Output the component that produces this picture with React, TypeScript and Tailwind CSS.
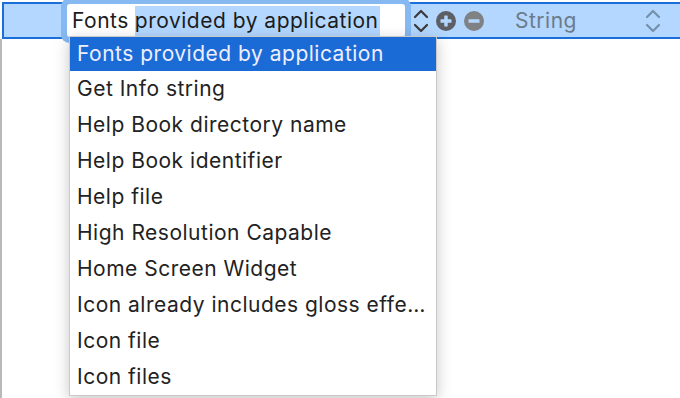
import React from "react";

const items = [
  "Fonts provided by application",
  "Get Info string",
  "Help Book directory name",
  "Help Book identifier",
  "Help file",
  "High Resolution Capable",
  "Home Screen Widget",
  "Icon already includes gloss effe…",
  "Icon file",
  "Icon files",
];

function Chevrons({ color }: { color: string }) {
  return (
    <svg width="16" height="26" viewBox="0 0 16 26" fill="none">
      <path d="M2 9 L8 3 L14 9" stroke={color} strokeWidth="2.2" strokeLinecap="round" strokeLinejoin="round" />
      <path d="M2 17 L8 23 L14 17" stroke={color} strokeWidth="2.2" strokeLinecap="round" strokeLinejoin="round" />
    </svg>
  );
}

function CircleBtn({ plus, color }: { plus: boolean; color: string }) {
  return (
    <svg width="20" height="20" viewBox="0 0 20 20">
      <circle cx="10" cy="10" r="10" fill={color} />
      <rect x="4.5" y="8.3" width="11" height="3.4" rx="0.5" fill="#b3d7ff" />
      {plus && <rect x="8.3" y="4.5" width="3.4" height="11" rx="0.5" fill="#b3d7ff" />}
    </svg>
  );
}

export default function App() {
  return (
    <div
      className="relative w-[680px] h-[398px] overflow-hidden bg-white tracking-[0.5px]"
      style={{ fontFamily: "Inter, 'Noto Sans', sans-serif" }}
    >
      <div className="flex h-full flex-col">
        <div className="h-[2px]" />
        <div className="flex h-[37px] ml-[2px] items-center border-2 border-r-0 border-[#1a6fd8] bg-[#b3d7ff]">
          <div className="w-[63px]" />
          <div className="relative z-0 h-[33px] w-[338px] rounded-[3px] bg-white ring-[6px] ring-[#86b8f1] flex items-center pl-[5px] text-[21px] text-[#1c1c1c]">
            <span>Fonts</span>
            <span className="ml-[6px] bg-[#b3d7ff] h-[30px] flex items-center pr-[2px]">provided by application</span>
          </div>
          <div className="ml-[8px]">
            <Chevrons color="#3a3a3a" />
          </div>
          <div className="ml-[7px] flex items-center gap-[8px]">
            <CircleBtn plus color="#5c5f63" />
            <CircleBtn plus={false} color="#7f8184" />
          </div>
          <div className="ml-[31px] text-[21px] text-[#6c7a89]">String</div>
          <div className="flex-1" />
          <div className="mr-[19px]">
            <Chevrons color="#7590ac" />
          </div>
        </div>
        <div className="flex flex-1">
          <div className="w-[2px] bg-[#b9b9b9]" />
        </div>
      </div>

      <div className="absolute left-[69px] top-[36px] z-10 w-[368px] border border-[#c9c9c9] bg-white shadow-[0_4px_14px_rgba(0,0,0,0.22)] text-[21px] text-[#222]">
        {items.map((it, i) => (
          <div
            key={it}
            className={
              i === 0
                ? "h-[34px] flex items-center pl-[7px] bg-[#1b6bd7] text-[#eeeeff] whitespace-nowrap overflow-hidden"
                : "h-[36px] flex items-center pl-[7px] whitespace-nowrap overflow-hidden"
            }
          >
            {it}
          </div>
        ))}
      </div>
    </div>
  );
}
